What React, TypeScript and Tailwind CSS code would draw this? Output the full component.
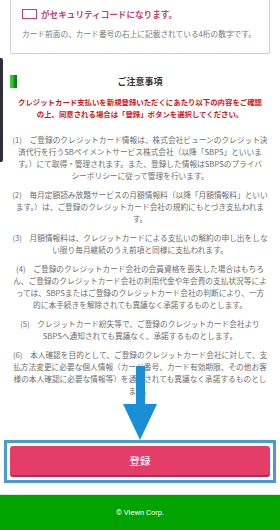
import React from "react";

const paras: string[][] = [
  [
    "(1)　ご登録のクレジットカード情報は、株式会社ビューンのクレジット決",
    "済代行を行うSBペイメントサービス株式会社（以降「SBPS」といいま",
    "す。）にて取得・管理されます。また、登録した情報はSBPSのプライバ",
    "シーポリシーに従って管理を行います。",
  ],
  [
    "(2)　毎月定額読み放題サービスの月額情報料（以降「月額情報料」といい",
    "ます。）は、ご登録のクレジットカード会社の規約にもとづき支払われま",
    "す。",
  ],
  [
    "(3)　月額情報料は、クレジットカードによる支払いの解約の申し出をしな",
    "い限り毎月継続のうえ前項と同様に支払われます。",
  ],
  [
    "(4)　ご登録のクレジットカード会社の会員資格を喪失した場合はもちろ",
    "ん、ご登録のクレジットカード会社の利用代金や年会費の支払状況等によ",
    "っては、SBPSまたはご登録のクレジットカード会社の判断により、一方",
    "的に本手続きを解除されても異議なく承諾するものとします。",
  ],
  [
    "(5)　クレジットカード紛失等で、ご登録のクレジットカード会社より",
    "SBPSへ通知されても異議なく、承諾するものとします。",
  ],
  [
    "(6)　本人確認を目的として、ご登録のクレジットカード会社に対して、支",
    "払方法変更に必要な個人情報（カード番号、カード有効期限、その他お客",
    "様の本人確認に必要な情報等）を通知されても異議なく承諾するものとし",
    "ます。",
  ],
];

export default function App() {
  return (
    <div className="relative w-[280px] h-[530px] overflow-hidden bg-white font-['Noto_Sans_CJK_JP',_'Noto_Sans',_sans-serif]">
      {/* card */}
      <div className="mx-[10px] h-[54px] border border-t-0 border-[#cfcfcf] rounded-b-[3px] px-[11px] pt-[6px]">
        <div className="flex items-center gap-[4px] h-[16px]">
          <div className="w-[15px] h-[10px] border-[1.5px] border-[#d43a6c]" />
          <span className="text-[8.6px] font-bold text-[#d43a6c] leading-[16px] whitespace-nowrap">
            がセキュリティコードになります。
          </span>
        </div>
        <p className="mt-[6px] text-[7.7px] leading-[12px] text-[#7a7a7a] whitespace-nowrap">
          カード前面の、カード番号の右上に記載されている4桁の数字です。
        </p>
      </div>

      {/* dark side tab */}
      <div className="absolute left-0 top-[58px] w-[3px] h-[104px] bg-[#2e2e3c] rounded-r-[2px]" />

      {/* notes section */}
      <div className="mt-[21px] px-[10px]">
        <div className="relative h-[13px] flex items-center justify-center">
          <div className="absolute left-0 top-0 w-[7px] h-[13px] bg-[linear-gradient(90deg,#3ccf3c_0%,#2cc02c_45%,#0e8f0e_60%,#0b7d0b_100%)]" />
          <span className="text-[9px] font-bold text-[#333] leading-[13px]">ご注意事項</span>
        </div>
        <p className="mt-[8px] text-center text-[7.4px] leading-[12px] font-bold text-[#e01010] whitespace-nowrap">
          クレジットカード支払いを新規登録いただくにあたり以下の内容をご確認
          <br />
          の上、同意される場合は「登録」ボタンを選択してください。
        </p>
        <div className="mt-[14px] flex flex-col gap-[7px]">
          {paras.map((lines, i) => (
            <p key={i} className="text-center text-[7.7px] leading-[12px] text-[#6e6e6e] whitespace-nowrap">
              {lines.map((l, j) => (
                <React.Fragment key={j}>
                  {l}
                  {j < lines.length - 1 && <br />}
                </React.Fragment>
              ))}
            </p>
          ))}
        </div>
      </div>

      {/* button box */}
      <div className="absolute left-0 right-0 top-[440px]">
        <div className="mx-[4px] border-[3px] border-[#4a9ad8] p-[3px]">
          <button className="w-full h-[31px] rounded-[3px] bg-[#e43d6a] border-b-[2px] border-[#b8284f] text-white text-[10.5px] font-normal leading-[29px] font-['Noto_Sans_CJK_JP',_sans-serif]">
            登録
          </button>
        </div>
      </div>

      {/* arrow */}
      <svg className="absolute left-[120px] top-[366px]" width="40" height="76" viewBox="0 0 40 76">
        <rect x="16" y="0" width="9" height="42" fill="#1a8fd8" />
        <polygon points="3,38 37,38 20,74" fill="#1a8fd8" />
      </svg>

      {/* footer */}
      <div className="absolute left-0 right-0 bottom-0 h-[36px] border-t border-[#d8e8d8] bg-[#00a300] flex items-center justify-center">
        <span className="text-[7.5px] font-normal text-white font-['Roboto',_sans-serif]">© Viewn Corp.</span>
      </div>
    </div>
  );
}
